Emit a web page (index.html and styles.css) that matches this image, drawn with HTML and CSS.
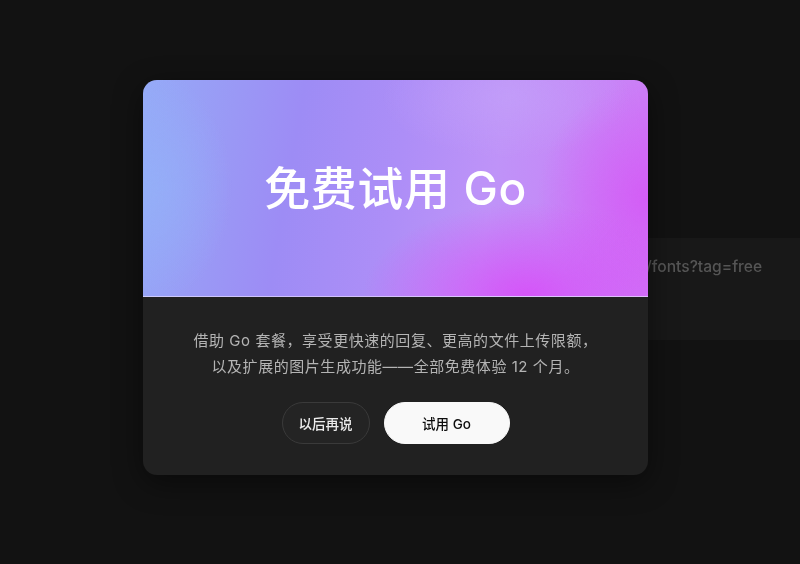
FILE: index.html
```html
<!DOCTYPE html>
<html lang="zh-CN">
<head>
<meta charset="utf-8">
<title>免费试用 Go</title>
<link rel="stylesheet" href="styles.css">
</head>
<body>
<main class="page">
  <div class="bg-panel">
    <span class="bg-url">/fonts?tag=free</span>
  </div>
</main>
<div class="overlay">
  <section class="modal" role="dialog" aria-labelledby="modal-title">
    <header class="hero">
      <h1 id="modal-title" class="hero-title">免费试用 Go</h1>
    </header>
    <div class="modal-body">
      <p class="desc">借助 Go 套餐，享受更快速的回复、更高的文件上传限额，<br>以及扩展的图片生成功能——全部免费体验 12 个月。</p>
      <div class="actions">
        <button class="btn btn-secondary">以后再说</button>
        <button class="btn btn-primary">试用 Go</button>
      </div>
    </div>
  </section>
</div>
</body>
</html>
```

FILE: styles.css
```css
* { box-sizing: border-box; }
html, body {
  margin: 0;
  height: 100%;
  background: #121212;
  font-family: "Inter", "Noto Sans CJK SC", "Noto Sans", sans-serif;
  overflow: hidden;
}
.page {
  padding-top: 238px;
  display: flex;
  justify-content: flex-end;
}
.bg-panel {
  width: 200px;
  height: 102px;
  background: #181818;
  padding: 19px 0 0 46px;
}
.bg-url {
  display: block;
  font-size: 15.6px;
  font-weight: 500;
  color: #555555;
  filter: blur(0.6px);
  white-space: nowrap;
}
.overlay {
  position: fixed;
  inset: 0;
  display: flex;
  justify-content: center;
  align-items: flex-start;
  padding: 80px 9px 0 0;
}
.modal {
  width: 505px;
  border-radius: 14px;
  overflow: hidden;
  background: #212121;
  box-shadow: 0 8px 30px rgba(0,0,0,0.45);
}
.hero {
  height: 217px;
  display: flex;
  align-items: center;
  justify-content: center;
  border-bottom: 1px solid rgba(235, 220, 255, 0.65);
  background:
    radial-gradient(ellipse 45% 60% at 76% 100%, rgba(214, 82, 248, 0.95), rgba(214, 82, 248, 0) 72%),
    radial-gradient(ellipse 28% 70% at 100% 55%, rgba(212, 90, 246, 0.9), rgba(212, 90, 246, 0) 78%),
    radial-gradient(ellipse 35% 40% at 72% 8%, rgba(196, 162, 249, 0.6), rgba(196, 162, 249, 0) 70%),
    radial-gradient(ellipse 22% 70% at 0% 50%, rgba(148, 176, 248, 0.9), rgba(148, 176, 248, 0) 80%),
    linear-gradient(100deg, #95aaf7 0%, #9a98f5 18%, #9d8cf5 30%, #ad8ef7 50%, #bf93f8 68%, #cf78f6 100%);
}
.hero-title {
  margin: 0;
  font-size: 46px;
  font-weight: 500;
  color: #ffffff;
  letter-spacing: 0.6px;
  line-height: 1;
}
.modal-body {
  padding: 31px 20px 31px;
  display: flex;
  flex-direction: column;
  align-items: center;
}
.desc {
  margin: 0;
  text-align: center;
  font-size: 15px;
  line-height: 25.5px;
  color: #b4b4b4;
  letter-spacing: 0.55px;
}
.actions {
  margin-top: 23px;
  display: flex;
  gap: 14px;
}
.btn {
  height: 42px;
  border-radius: 21px;
  font-family: inherit;
  font-size: 13.5px;
  font-weight: 500;
  cursor: pointer;
}
.btn-secondary {
  width: 88px;
  background: #242424;
  color: #ececec;
  border: 1px solid #3a3a3a;
}
.btn-primary {
  width: 126px;
  background: #f9f9f9;
  color: #0d0d0d;
  border: 1px solid #f9f9f9;
}
```
